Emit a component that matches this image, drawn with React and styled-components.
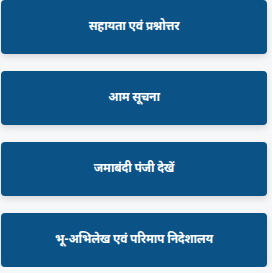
import React from 'react';
import styled, { createGlobalStyle } from 'styled-components';

const GlobalStyle = createGlobalStyle`
  body {
    margin: 0;
    background: #f6f7f8;
    font-family: "Noto Sans Devanagari", "Noto Sans", "DejaVu Sans", sans-serif;
  }
`;

const Menu = styled.div`
  display: flex;
  flex-direction: column;
  gap: 17px;
  width: 266px;
  padding: 0 0 0 1px;
`;

const MenuButton = styled.button`
  height: 54px;
  border: none;
  border-radius: 4px;
  background: #0b5387;
  color: #ffffff;
  font-family: inherit;
  font-size: 12px;
  font-weight: 700;
  letter-spacing: -0.2px;
  box-shadow: 0 3px 6px rgba(0, 0, 0, 0.12);
  cursor: pointer;
`;

const items = [
  'सहायता एवं प्रश्नोत्तर',
  'आम सूचना',
  'जमाबंदी पंजी देखें',
  'भू-अभिलेख एवं परिमाप निदेशालय',
];

export default function App() {
  return (
    <>
      <GlobalStyle />
      <Menu>
        {items.map((label) => (
          <MenuButton key={label}>{label}</MenuButton>
        ))}
      </Menu>
    </>
  );
}
